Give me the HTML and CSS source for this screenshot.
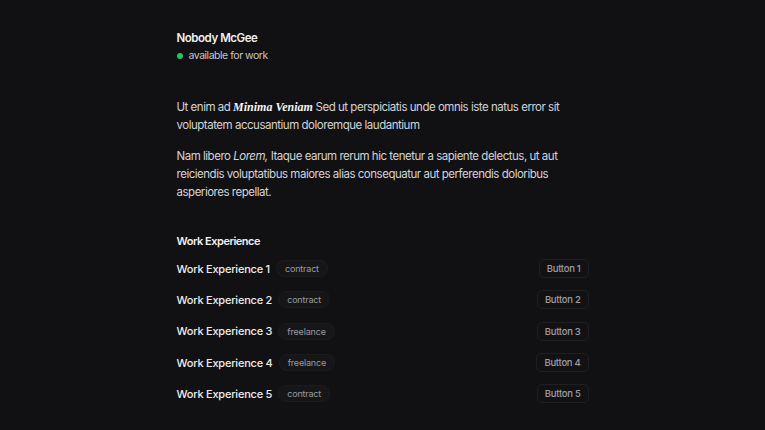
FILE: index.html
```html
<!DOCTYPE html>
<html>
<head>
<meta charset="utf-8">
<link rel="stylesheet" href="styles.css">
</head>
<body>
<main class="page">
  <header class="intro">
    <h1 class="name">Nobody McGee</h1>
    <div class="status"><span class="dot"></span>available for work</div>
  </header>
  <section class="about">
    <p>Ut enim ad <em class="serif">Minima Veniam</em> Sed ut perspiciatis unde omnis iste natus error sit voluptatem accusantium doloremque laudantium</p>
    <p>Nam libero <em>Lorem,</em> Itaque earum rerum hic tenetur a sapiente delectus, ut aut reiciendis voluptatibus maiores alias consequatur aut perferendis doloribus asperiores repellat.</p>
  </section>
  <section class="work">
    <h2 class="work-title">Work Experience</h2>
    <ul class="jobs">
      <li class="job"><span class="job-name">Work Experience 1</span><span class="tag">contract</span><button class="btn">Button 1</button></li>
      <li class="job"><span class="job-name">Work Experience 2</span><span class="tag">contract</span><button class="btn">Button 2</button></li>
      <li class="job"><span class="job-name">Work Experience 3</span><span class="tag">freelance</span><button class="btn">Button 3</button></li>
      <li class="job"><span class="job-name">Work Experience 4</span><span class="tag">freelance</span><button class="btn">Button 4</button></li>
      <li class="job"><span class="job-name">Work Experience 5</span><span class="tag">contract</span><button class="btn">Button 5</button></li>
    </ul>
  </section>
</main>
</body>
</html>
```
FILE: styles.css
```css
html, body {
  margin: 0;
  padding: 0;
  background: #111113;
}
body {
  font-family: Inter, "Noto Sans", sans-serif;
  letter-spacing: -0.03em;
  color: #e4e4e7;
  -webkit-font-smoothing: antialiased;
}
.page {
  width: 412px;
  margin: 0 auto;
  padding-top: 31px;
}
.name {
  margin: 0;
  font-size: 11.5px;
  font-weight: 600;
  letter-spacing: -0.04em;
  line-height: 14px;
  color: #f0f0f2;
}
.status {
  display: flex;
  align-items: center;
  gap: 6px;
  margin-top: 4px;
  font-size: 10.5px;
  line-height: 14px;
  color: #c4c4c8;
}
.dot {
  width: 6px;
  height: 6px;
  border-radius: 50%;
  background: #22c55e;
}
.about {
  margin-top: 35px;
}
.about p {
  margin: 0 0 13px;
  font-size: 11.5px;
  line-height: 18px;
  color: #d4d4d8;
}
.about em {
  font-style: italic;
}
.serif {
  font-family: "Liberation Serif", serif;
  font-weight: 700;
  font-size: 12px;
  letter-spacing: 0;
  color: #f4f4f5;
}
.work {
  margin-top: 33px;
}
.work-title {
  margin: 0;
  font-size: 11px;
  font-weight: 600;
  line-height: 14px;
  color: #f0f0f2;
}
.jobs {
  list-style: none;
  margin: 11px 0 0;
  padding: 0;
  display: flex;
  flex-direction: column;
  gap: 12px;
}
.job {
  display: flex;
  align-items: center;
  height: 19.3px;
}
.job-name {
  font-size: 11px;
  font-weight: 450;
  letter-spacing: -0.02em;
  color: #ececee;
}
.tag {
  margin-left: 6px;
  padding: 0 8px;
  height: 15px;
  line-height: 15px;
  border-radius: 8px;
  background: #161618;
  border: 1px solid #1c1c1f;
  font-size: 9px;
  letter-spacing: -0.02em;
  color: #9a9aa0;
}
.btn {
  margin-left: auto;
  height: 19px;
  padding: 0 7px;
  background: #121214;
  border: 1px solid #1f1f22;
  border-radius: 5px;
  font-family: Inter, "Noto Sans", sans-serif;
  font-size: 9.5px;
  letter-spacing: -0.03em;
  font-weight: 500;
  color: #9e9ea4;
}
```
